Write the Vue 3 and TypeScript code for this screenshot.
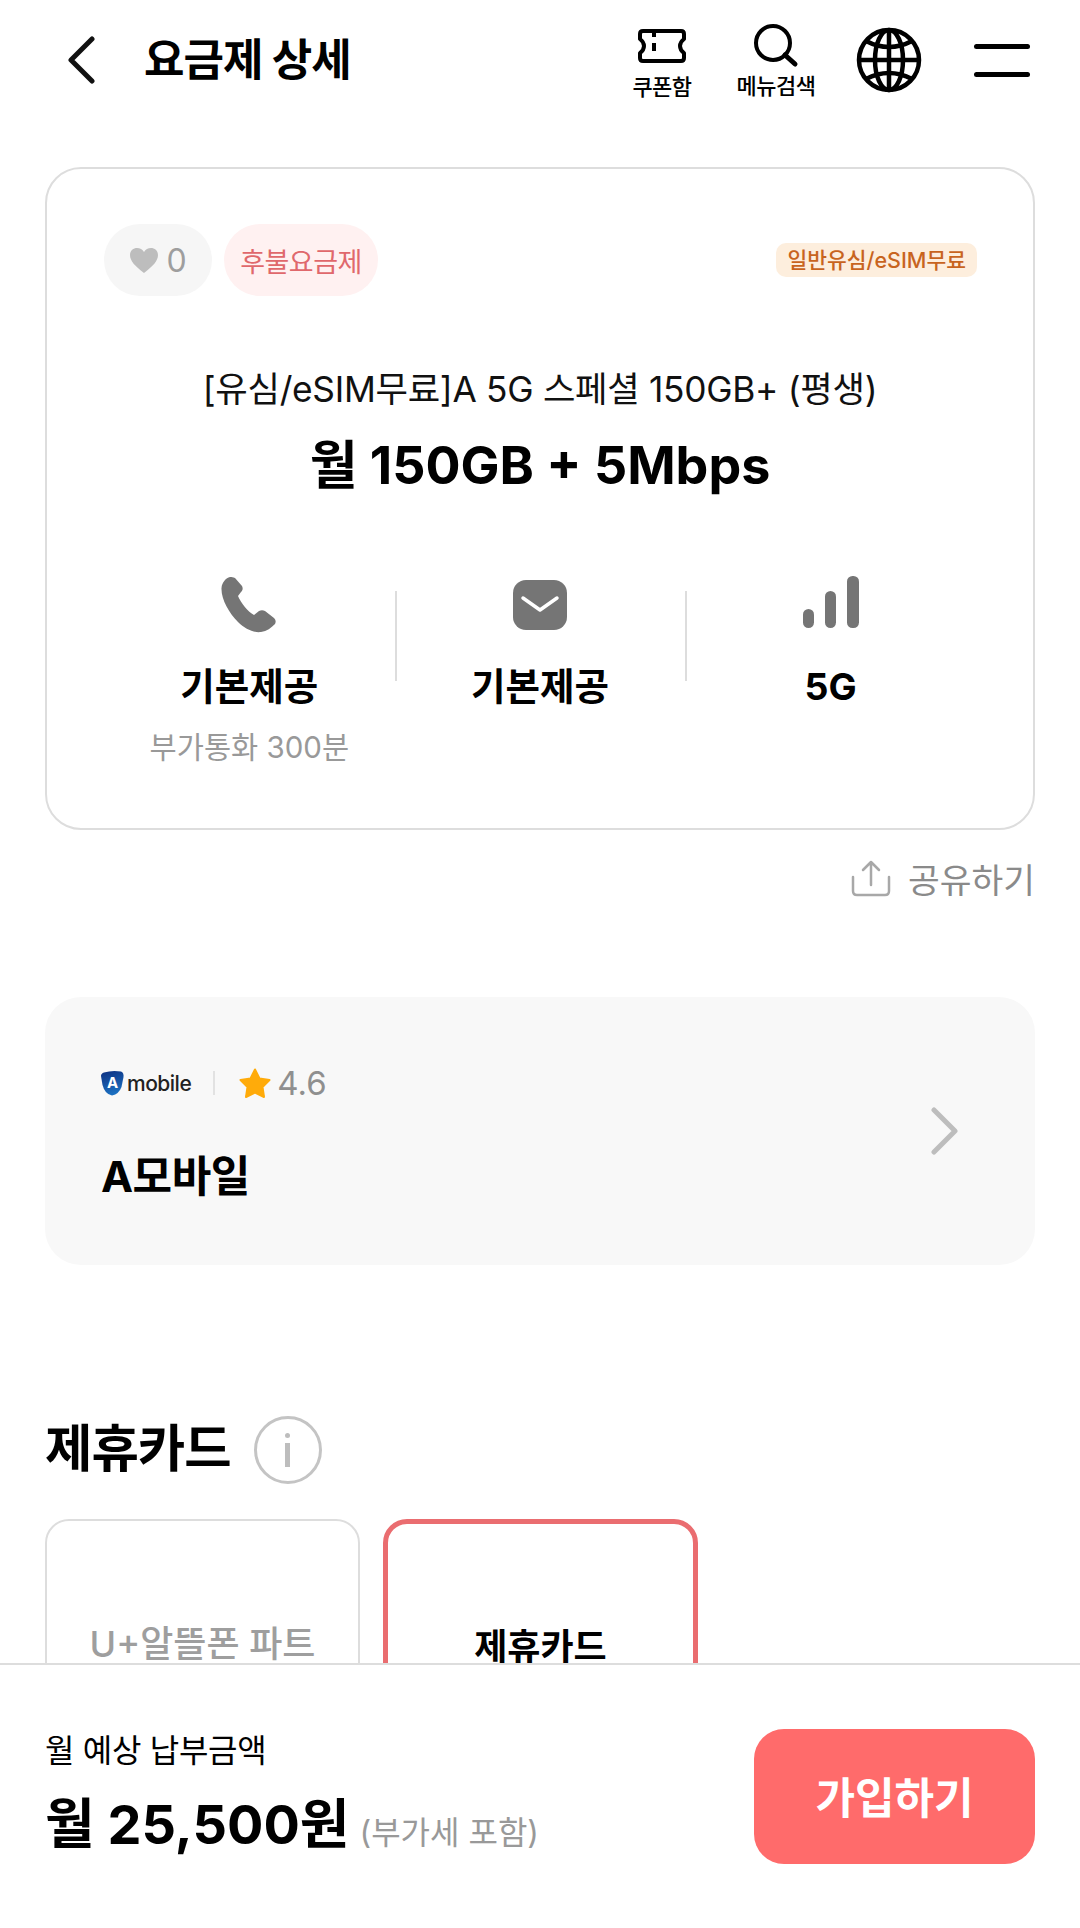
<script setup lang="ts">
const specs = [
  { key: 'call', label: '기본제공', sub: '부가통화 300분' },
  { key: 'sms', label: '기본제공', sub: '' },
  { key: 'net', label: '5G', sub: '' },
]
</script>

<template>
  <div class="page">
    <header class="top">
      <svg class="back" width="30" height="48" viewBox="0 0 30 48" fill="none">
        <path d="M26 3 L5 24 L26 45" stroke="#111" stroke-width="5" stroke-linecap="round" stroke-linejoin="round" />
      </svg>
      <h1 class="top-title">요금제 상세</h1>
      <div class="top-icons">
        <div class="top-btn coupon">
          <svg width="50" height="36" viewBox="0 0 50 36" fill="none">
            <path d="M6 3 H44 Q47 3 47 6 V11 Q43 14 43 18 Q43 22 47 25 V30 Q47 33 44 33 H6 Q3 33 3 30 V25 Q7 22 7 18 Q7 14 3 11 V6 Q3 3 6 3 Z" stroke="#000" stroke-width="4" stroke-linejoin="round" />
            <path d="M17 3 V9 M17 15 V23" stroke="#000" stroke-width="4" />
          </svg>
          <span>쿠폰함</span>
        </div>
        <div class="top-btn search">
          <svg width="46" height="44" viewBox="0 0 46 44" fill="none">
            <circle cx="20" cy="19" r="17" stroke="#000" stroke-width="4" />
            <path d="M32 31 L42 40" stroke="#000" stroke-width="5" stroke-linecap="round" />
          </svg>
          <span>메뉴검색</span>
        </div>
        <svg class="globe" width="66" height="66" viewBox="0 0 66 66" fill="none" stroke="#000" stroke-width="4.500">
          <circle cx="33" cy="33" r="30" />
          <ellipse cx="33" cy="33" rx="14" ry="30" />
          <path d="M33 3 V63 M3 33 H63" />
          <path d="M10 14 Q33 26 56 14 M10 52 Q33 40 56 52" />
        </svg>
        <div class="burger"><i></i><i></i></div>
      </div>
    </header>

    <main class="content">
      <section class="plan">
        <div class="plan-tags">
          <div class="chip chip-like">
            <svg width="30" height="27" viewBox="0 0 30 27">
              <path d="M15 26 C6 19 1 14 1 8 C1 3.500 4.500 1 8 1 C11 1 13.500 2.500 15 5 C16.500 2.500 19 1 22 1 C25.500 1 29 3.500 29 8 C29 14 24 19 15 26 Z" fill="#bdbdbd" />
            </svg>
            <span>0</span>
          </div>
          <div class="chip chip-type">후불요금제</div>
          <div class="usim-tag">일반유심/eSIM무료</div>
        </div>
        <p class="plan-sub">[유심/eSIM무료]A 5G 스페셜 150GB+ (평생)</p>
        <p class="plan-name">월 150GB + 5Mbps</p>
        <div class="specs">
          <div v-for="s in specs" :key="s.key" class="spec">
            <div class="spec-icon">
              <svg v-if="s.key === 'call'" width="56" height="56" viewBox="0 0 56 56">
                <path d="M9 0 C5 1 1 5 0.500 11 C0 22 8 36 17 45 C24 52 33 56 40 55 C46 54 50 51 54 47 C55 45 55 43 53 41 L44 34 C42 33 40 33 38 34 L33 38 C27 35 20 26 17 19 L20 15 C22 13 22 11 21 9 L14 1 C12 0 11 0 9 0 Z" fill="#757575" />
              </svg>
              <svg v-else-if="s.key === 'sms'" width="54" height="50" viewBox="0 0 54 50">
                <rect width="54" height="50" rx="13" fill="#757575" />
                <path d="M10 18 L27 30 L44 18" stroke="#fff" stroke-width="3.500" fill="none" stroke-linecap="round" stroke-linejoin="round" />
              </svg>
              <svg v-else class="bars" width="56" height="52" viewBox="0 0 56 52" fill="#757575">
                <rect x="0" y="33" width="11" height="19" rx="5.500" />
                <rect x="22" y="15" width="11" height="37" rx="5.500" />
                <rect x="44" y="0" width="12" height="52" rx="5.500" />
              </svg>
            </div>
            <div class="spec-label">{{ s.label }}</div>
            <div v-if="s.sub" class="spec-sub">{{ s.sub }}</div>
          </div>
        </div>
      </section>

      <div class="share">
        <svg width="40" height="38" viewBox="0 0 40 38" fill="none" stroke="#a8a8a8" stroke-width="2.500" stroke-linecap="round" stroke-linejoin="round">
          <path d="M2 18 V32 Q2 36 6 36 H34 Q38 36 38 32 V18" />
          <path d="M20 26 V3 M12 11 L20 3 L28 11" />
        </svg>
        <span>공유하기</span>
      </div>

      <section class="shop">
        <div class="shop-info">
          <div class="shop-meta">
            <div class="logo">
              <svg width="23" height="26" viewBox="0 0 23 26">
                <defs>
                  <linearGradient id="markFill" x1="0" y1="0" x2="0.300" y2="1">
                    <stop offset="0" stop-color="#0d2f80" />
                    <stop offset="1" stop-color="#1b6fc0" />
                  </linearGradient>
                </defs>
                <path d="M3 2.500 Q11 0 20 1.500 Q23 2.500 22.500 7 L20.500 17 Q18 24 11 25.500 Q4 24.500 1.500 15 L0 6 Q0 3.500 3 2.500 Z" fill="url(#markFill)" />
                <text x="11.500" y="18" text-anchor="middle" font-size="15" font-weight="700" fill="#fff">A</text>
              </svg>
              <span class="logo-text">mobile</span>
            </div>
            <span class="meta-line"></span>
            <svg width="32" height="30" viewBox="0 0 32 30">
              <path d="M16 1.500 L20.500 10.500 L30.500 12 L23.500 19 L25 29 L16 24.500 L7 29 L8.500 19 L1.500 12 L11.500 10.500 Z" fill="#ffab0a" stroke="#ffab0a" stroke-width="2" stroke-linejoin="round" />
            </svg>
            <span class="rating">4.6</span>
          </div>
          <div class="shop-name">A모바일</div>
        </div>
        <svg class="shop-arrow" width="30" height="48" viewBox="0 0 30 48" fill="none">
          <path d="M4 3 L25 24 L4 45" stroke="#bdbdbd" stroke-width="5" stroke-linecap="round" stroke-linejoin="round" />
        </svg>
      </section>

      <section class="cards">
        <div class="cards-head">
          <h2>제휴카드</h2>
          <div class="info-btn"><i></i><b></b></div>
        </div>
        <div class="card-tabs">
          <div class="card-tab">U+알뜰폰 파트</div>
          <div class="card-tab active">제휴카드</div>
        </div>
      </section>
    </main>

    <footer class="bottom">
      <div class="price">
        <div class="price-label">월 예상 납부금액</div>
        <div class="price-row">
          <strong>월 25,500원</strong>
          <span>(부가세 포함)</span>
        </div>
      </div>
      <button class="join">가입하기</button>
    </footer>
  </div>
</template>

<style scoped>
.page {
  width: 1080px;
  height: 1928px;
  display: flex;
  flex-direction: column;
  overflow: hidden;
  background: #fff;
  color: #000;
  font-family: Inter, "Noto Sans CJK KR", "Noto Sans", sans-serif;
}

.top {
  height: 120px;
  flex: none;
  display: flex;
  align-items: center;
  padding: 0 50px 0 66px;
}
.back {
  flex: none;
}
.top-title {
  margin: 0 0 6px 48px;
  font-size: 44px;
  font-weight: 700;
  letter-spacing: -1px;
}
.top-icons {
  margin-left: auto;
  display: flex;
  align-items: center;
}
.top-btn {
  display: flex;
  flex-direction: column;
  align-items: center;
  font-size: 22px;
  font-weight: 500;
  letter-spacing: -0.5px;
}
.coupon {
  width: 66px;
  gap: 5px;
  padding-top: 8px;
}
.search {
  width: 84px;
  margin-left: 39px;
  padding-top: 3px;
  gap: 0;
}
.globe {
  margin-left: 38px;
}
.burger {
  width: 56px;
  height: 33px;
  margin-left: 52px;
  display: flex;
  flex-direction: column;
  justify-content: space-between;
}
.burger i {
  height: 5px;
  border-radius: 3px;
  background: #000;
}

.content {
  flex: 1;
  min-height: 0;
  overflow: hidden;
  padding: 47px 45px 0;
}

.plan {
  height: 663px;
  box-sizing: border-box;
  border: 2px solid #ddd;
  border-radius: 36px;
  padding: 55px 57px 0;
  text-align: center;
}
.plan-tags {
  display: flex;
  align-items: center;
  gap: 12px;
}
.chip {
  height: 72px;
  border-radius: 36px;
  display: flex;
  align-items: center;
  justify-content: center;
  font-size: 27px;
}
.chip-like {
  width: 108px;
  gap: 7px;
  background: #f6f6f6;
  color: #9e9e9e;
  font-size: 32px;
}
.chip-type {
  width: 154px;
  background: #fff1f1;
  color: #e0686c;
  letter-spacing: -0.5px;
}
.usim-tag {
  margin-left: auto;
  margin-right: -1px;
  height: 34px;
  padding: 0 11px;
  border-radius: 10px;
  background: #fdeedd;
  color: #c8641e;
  font-size: 21.5px;
  font-weight: 500;
  line-height: 34px;
}
.plan-sub {
  margin: 71px 0 0;
  font-size: 35.3px;
  line-height: 46px;
  letter-spacing: -0.3px;
  color: #111;
}
.plan-name {
  margin: 21px 0 0;
  font-size: 52px;
  line-height: 64px;
  font-weight: 700;
}
.specs {
  display: flex;
  padding-top: 77px;
}
.spec {
  flex: 1;
  position: relative;
  display: flex;
  flex-direction: column;
  align-items: center;
}
.spec + .spec::before {
  content: "";
  position: absolute;
  left: 0;
  top: 16px;
  height: 90px;
  width: 2px;
  background: #ddd;
}
.spec-icon {
  height: 60px;
  display: flex;
  align-items: center;
  justify-content: center;
}
.bars {
  margin-bottom: 6px;
}
.spec-label {
  margin-top: 27px;
  font-size: 37.5px;
  line-height: 50px;
  font-weight: 700;
}
.spec-sub {
  margin-top: 15px;
  font-size: 29.5px;
  line-height: 40px;
  color: #999;
}

.share {
  height: 95px;
  display: flex;
  align-items: center;
  justify-content: flex-end;
  gap: 17px;
  font-size: 34.5px;
  color: #8a8a8a;
}

.shop {
  height: 268px;
  margin-top: 72px;
  box-sizing: border-box;
  padding: 4px 75px 0 56px;
  display: flex;
  align-items: center;
  justify-content: space-between;
  background: #f8f8f8;
  border-radius: 36px;
}
.shop-meta {
  display: flex;
  align-items: center;
  padding-top: 2px;
}
.logo {
  display: flex;
  align-items: center;
  gap: 3px;
}
.logo svg text {
  font-family: Inter, sans-serif;
}
.logo-text {
  font-size: 21px;
  font-weight: 500;
  letter-spacing: -0.5px;
  color: #222;
}
.meta-line {
  width: 2px;
  height: 24px;
  margin: 0 24px 0 22px;
  background: #e2e2e2;
}
.rating {
  margin-left: 6px;
  font-size: 33px;
  color: #8f8f8f;
}
.shop-name {
  margin-top: 44px;
  font-size: 43px;
  line-height: 58px;
  font-weight: 700;
  letter-spacing: -0.5px;
}
.shop-arrow {
  flex: none;
  margin-bottom: 4px;
}

.cards {
  margin-top: 151px;
}
.cards-head {
  display: flex;
  align-items: center;
  gap: 23px;
}
.cards-head h2 {
  margin: 0 0 4px;
  font-size: 51.5px;
  line-height: 64px;
  font-weight: 700;
  letter-spacing: -1px;
}
.info-btn {
  width: 68px;
  height: 68px;
  box-sizing: border-box;
  border: 3px solid #c4c4c4;
  border-radius: 50%;
  display: flex;
  flex-direction: column;
  align-items: center;
  justify-content: center;
  gap: 5px;
}
.info-btn i {
  width: 5px;
  height: 5px;
  border-radius: 50%;
  background: #bdbdbd;
}
.info-btn b {
  width: 5px;
  height: 24px;
  background: #bdbdbd;
}
.card-tabs {
  display: flex;
  gap: 23px;
  margin-top: 35px;
}
.card-tab {
  width: 315px;
  height: 220px;
  box-sizing: border-box;
  border: 2px solid #ddd;
  border-radius: 24px;
  padding-top: 98px;
  text-align: center;
  font-size: 36px;
  line-height: 50px;
  font-weight: 500;
  color: #9e9e9e;
}
.card-tab.active {
  border: 5px solid #ea6d70;
  padding-top: 98px;
  color: #000;
  font-weight: 700;
}

.bottom {
  height: 265px;
  flex: none;
  box-sizing: border-box;
  border-top: 2px solid #ddd;
  background: #fff;
  padding: 64px 45px 0 45px;
  display: flex;
  align-items: flex-start;
  justify-content: space-between;
}
.price-label {
  font-size: 32px;
  line-height: 44px;
  letter-spacing: -0.3px;
}
.price-row {
  margin-top: 14px;
  display: flex;
  align-items: baseline;
  gap: 10px;
}
.price-row strong {
  font-size: 54px;
  line-height: 76px;
  font-weight: 700;
}
.price-row span {
  font-size: 32px;
  color: #999;
}
.join {
  width: 281px;
  height: 135px;
  border: 0;
  border-radius: 30px;
  background: #ff6b6b;
  color: #fff;
  font-family: inherit;
  font-size: 43px;
  font-weight: 700;
  padding: 0 0 4px;
}
</style>
